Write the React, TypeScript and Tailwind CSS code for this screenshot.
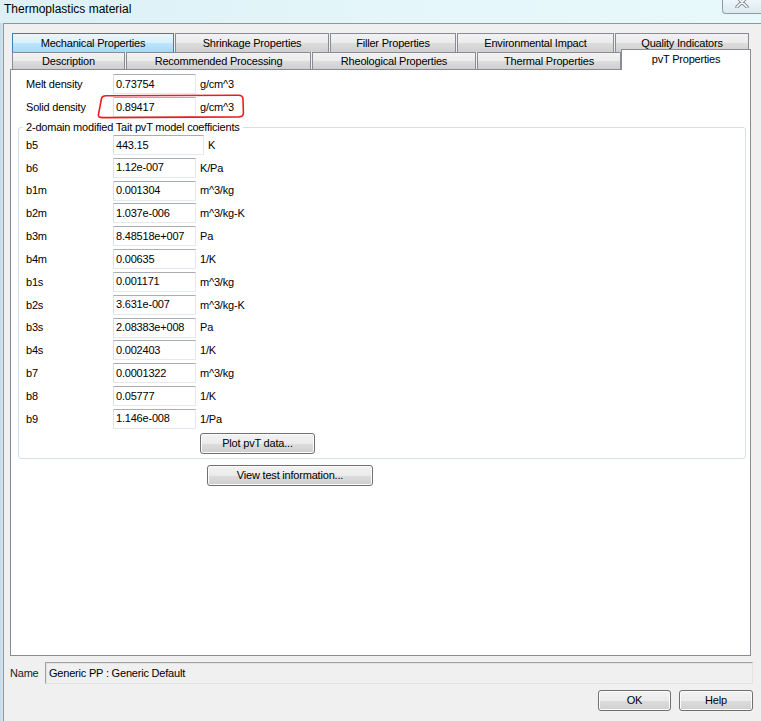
import React from "react";

type Row = { k: string; v: string; u: string; wide?: boolean };

const rows: Row[] = [
  { k: "b5", v: "443.15", u: "K", wide: true },
  { k: "b6", v: "1.12e-007", u: "K/Pa" },
  { k: "b1m", v: "0.001304", u: "m^3/kg" },
  { k: "b2m", v: "1.037e-006", u: "m^3/kg-K" },
  { k: "b3m", v: "8.48518e+007", u: "Pa" },
  { k: "b4m", v: "0.00635", u: "1/K" },
  { k: "b1s", v: "0.001171", u: "m^3/kg" },
  { k: "b2s", v: "3.631e-007", u: "m^3/kg-K" },
  { k: "b3s", v: "2.08383e+008", u: "Pa" },
  { k: "b4s", v: "0.002403", u: "1/K" },
  { k: "b7", v: "0.0001322", u: "m^3/kg" },
  { k: "b8", v: "0.05777", u: "1/K" },
  { k: "b9", v: "1.146e-008", u: "1/Pa" },
];

function Field({ value, wide }: { value: string; wide?: boolean }) {
  return (
    <div
      className={`${wide ? "w-[91px]" : "w-[83px]"} h-[20px] shrink-0 bg-white border border-[#e3e9ef] border-t-[#abadb3] border-l-[#dbdfe6] pl-[2px] flex items-center leading-none`}
    >
      {value}
    </div>
  );
}

function Btn({ label, w }: { label: string; w: string }) {
  return (
    <div
      className={`${w} h-[21px] shrink-0 rounded-[3px] border border-[#707070] bg-[linear-gradient(#f2f2f2_0%,#ebebeb_50%,#dddddd_50%,#cfcfcf_100%)] shadow-[inset_0_0_0_1px_#fcfcfc] flex items-center justify-center leading-none`}
    >
      {label}
    </div>
  );
}

function Tab({ label, w, hover }: { label: string; w: string; hover?: boolean }) {
  return (
    <div
      className={`${w} h-full shrink-0 border border-b-0 ${
        hover
          ? "border-[#3c7fb1] bg-[linear-gradient(#eaf6fd_0%,#d9f0fc_50%,#bee6fd_50%,#a7d9f5_100%)]"
          : "border-[#898c95] bg-[linear-gradient(#f2f2f2_0%,#ebebeb_50%,#dddddd_50%,#cfcfcf_100%)]"
      } flex items-center justify-center leading-none pt-[1px]`}
    >
      {label}
    </div>
  );
}

export default function App() {
  return (
    <div className="relative w-[761px] h-[721px] overflow-hidden bg-[#f0f0f0] text-black text-[11px] tracking-[-0.2px] font-['Liberation_Sans',Arial,sans-serif]">
      {/* Title bar */}
      <div className="h-[23px] flex justify-between bg-[linear-gradient(90deg,#dcf0f6_0%,#e4f6fa_50%,#e8f9fb_100%)]">
        <div className="pl-[4px] pt-[1px] text-[12px] tracking-normal leading-[16px] text-[#000000]">
          Thermoplastics material
        </div>
        <div className="w-[44px] h-[14px] mr-[-5px] border border-t-0 border-[#8e9ba4] rounded-bl-[4px] bg-[linear-gradient(#eef6f9,#dce9ef)] overflow-hidden flex justify-center">
          <svg width="16" height="12" viewBox="0 0 16 12" className="mt-[-4px] mr-[5px]">
            <path d="M3 1 L13 11 M13 1 L3 11" stroke="#7d8a93" strokeWidth="3.4" strokeLinecap="round" />
            <path d="M3 1 L13 11 M13 1 L3 11" stroke="#ffffff" strokeWidth="1.6" strokeLinecap="round" />
          </svg>
        </div>
      </div>

      {/* Window body */}
      <div className="flex h-[698px]">
        <div className="w-[3px] shrink-0 bg-[linear-gradient(90deg,#c7d9e5,#d6e6ef)]" />
        <div className="flex-1 border-l border-t border-[#8f969c] pt-[9px]">
          {/* Tabs row 1 */}
          <div className="ml-[8px] h-[19px] flex gap-[1px]">
            <Tab label="Mechanical Properties" w="w-[162px]" hover />
            <Tab label="Shrinkage Properties" w="w-[154px]" />
            <Tab label="Filler Properties" w="w-[126px]" />
            <Tab label="Environmental Impact" w="w-[157px]" />
            <Tab label="Quality Indicators" w="w-[134px]" />
          </div>
          {/* Tabs row 2 */}
          <div className="ml-[8px] h-[17px] flex items-end gap-[1px]">
            <Tab label="Description" w="w-[113px]" />
            <Tab label="Recommended Processing" w="w-[185px]" />
            <Tab label="Rheological Properties" w="w-[164px]" />
            <Tab label="Thermal Properties" w="w-[144px]" />
            <div className="relative z-10 w-[130px] h-[21px] mb-[-1px] ml-[-1px] shrink-0 bg-white border border-b-0 border-[#898c95] flex justify-center pt-[4px] leading-none">
              pvT Properties
            </div>
          </div>

          {/* Panel */}
          <div className="ml-[6px] w-[741px] h-[587px] bg-white border border-[#898c95] pt-[4px]">
            <div className="flex items-center h-[20px]">
              <div className="w-[102px] pl-[15px] shrink-0">Melt density</div>
              <Field value="0.73754" />
              <div className="ml-[4px]">g/cm^3</div>
            </div>
            <div className="flex items-center h-[20px] mt-[3px]">
              <div className="w-[102px] pl-[15px] shrink-0">Solid density</div>
              <Field value="0.89417" />
              <div className="ml-[4px]">g/cm^3</div>
            </div>

            <fieldset className="ml-[7px] mt-[4px] w-[728px] border border-[#d5dfe5] rounded-[3px] pl-[4px] pb-[4px]">
              <legend className="px-[3px] leading-[13px]">2-domain modified Tait pvT model coefficients</legend>
              <div className="mt-[1px] flex flex-col gap-[2.83px]">
                {rows.map((r) => (
                  <div key={r.k} className="flex items-center h-[20px]">
                    <div className="w-[90px] pl-[3px] shrink-0">{r.k}</div>
                    <Field value={r.v} wide={r.wide} />
                    <div className="ml-[4px]">{r.u}</div>
                  </div>
                ))}
              </div>
              <div className="mt-[4px] ml-[177px]">
                <Btn label="Plot pvT data..." w="w-[115px]" />
              </div>
            </fieldset>

            <div className="mt-[6px] ml-[196px]">
              <Btn label="View test information..." w="w-[166px]" />
            </div>
          </div>

          {/* Name row */}
          <div className="mt-[6px] flex items-center h-[22px]">
            <div className="w-[41px] pl-[6px] shrink-0 text-[#1a1a1a]">Name</div>
            <div className="w-[708px] h-[22px] border border-[#a0a0a0] border-r-[#e3e3e3] border-b-[#e3e3e3] shadow-[inset_1px_1px_0_#e3e3e3] flex items-center pl-[3px] leading-none">
              Generic PP : Generic Default
            </div>
          </div>

          {/* Buttons */}
          <div className="mt-[6px] flex justify-end gap-[8px] pr-[8px]">
            <Btn label="OK" w="w-[73px]" />
            <Btn label="Help" w="w-[74px]" />
          </div>
        </div>
      </div>

      {/* Red annotation */}
      <svg className="absolute inset-0 pointer-events-none" width="761" height="721" viewBox="0 0 761 721">
        <path
          d="M101.5 98.5 C102 96.5 103.5 95.8 106 95.8 L238.5 95.3 C241.8 95.3 243 96.5 243 99.5 L243.4 113 C243.4 116 242 116.8 239 116.9 L103 117.6 C99.5 117.6 98.2 117 98.4 114.8 Z"
          fill="none"
          stroke="#ea1c24"
          strokeWidth="1.6"
        />
      </svg>
    </div>
  );
}
